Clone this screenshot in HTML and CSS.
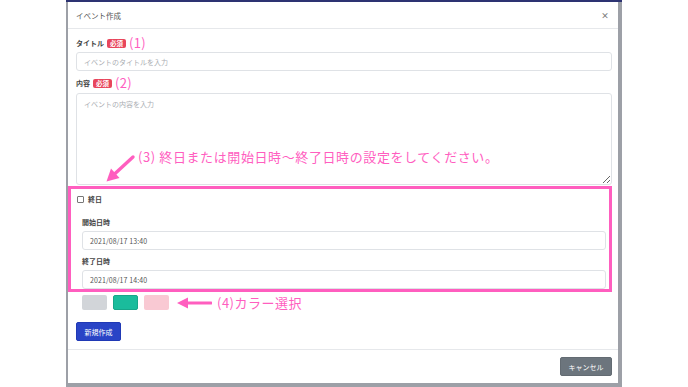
FILE: index.html
```html
<!DOCTYPE html>
<html lang="ja">
<head>
<meta charset="utf-8">
<title>イベント作成</title>
<link rel="stylesheet" href="styles.css">
</head>
<body>
<div class="stage">
  <div class="modal">
    <div class="modal-header">
      <span class="modal-title">イベント作成</span>
      <span class="close">×</span>
    </div>
    <div class="modal-body">
      <div class="label-row"><span class="label">タイトル</span><span class="badge">必須</span><span class="note">(1)</span></div>
      <input class="field field-title" type="text" placeholder="イベントのタイトルを入力">
      <div class="label-row label-row-content"><span class="label">内容</span><span class="badge">必須</span><span class="note">(2)</span></div>
      <textarea class="field field-area" placeholder="イベントの内容を入力"></textarea>
      <div class="date-box">
        <div class="check-row"><span class="checkbox"></span><span class="label">終日</span></div>
        <div class="date-block">
          <div class="sub-label first">開始日時</div>
          <div class="field field-date">2021/08/17 13:40</div>
          <div class="sub-label">終了日時</div>
          <div class="field field-date">2021/08/17 14:40</div>
        </div>
      </div>
      <div class="swatch-row">
        <span class="swatch swatch-gray"></span>
        <span class="swatch swatch-teal"></span>
        <span class="swatch swatch-pink"></span>
        <svg class="arrow-left" width="35" height="12" viewBox="0 0 35 12">
          <line x1="34" y1="6" x2="9" y2="6" stroke="#ff5ebf" stroke-width="3.2" stroke-linecap="round"/>
          <polygon points="0,6 11,0.5 11,11.5" fill="#ff5ebf"/>
        </svg>
        <span class="note note-color">(4)カラー選択</span>
      </div>
      <button class="btn btn-primary">新規作成</button>
    </div>
    <div class="modal-footer">
      <button class="btn btn-secondary">キャンセル</button>
    </div>
    <svg class="arrow-diag" width="33" height="30" viewBox="0 0 33 30">
      <line x1="29" y1="3" x2="10" y2="20.5" stroke="#ff5ebf" stroke-width="3.4" stroke-linecap="round"/>
      <polygon points="2.5,27.5 15.5,24 7,14.6" fill="#ff5ebf"/>
    </svg>
    <div class="note note-date">(3) 終日または開始日時〜終了日時の設定をしてください。</div>
  </div>
</div>
</body>
</html>
```
FILE: styles.css
```css
* { box-sizing: border-box; }
html, body { margin: 0; padding: 0; background: #fff; }
body { font-family: "Noto Sans CJK JP", "Noto Sans", sans-serif; }

.stage {
  margin-left: 66px;
  width: 556px;
  height: 387px;
  background: #9da0a7;
  border-top: 2px solid #2d3372;
  padding: 0 4px 4px 2px;
}

.modal {
  position: relative;
  background: #fff;
  height: 100%;
  display: flex;
  flex-direction: column;
}

.modal-header {
  height: 27px;
  border-bottom: 1px solid #e6e8eb;
  display: flex;
  align-items: center;
  justify-content: space-between;
  padding: 0 9px 0 8px;
  color: #555;
}
.modal-title { font-size: 7.5px; }
.close { font-size: 8px; color: #777; font-weight: bold; line-height: 8px; margin-top: 2px; }

.modal-body {
  padding: 6px 6px 8px 8px;
  border-bottom: 1px solid #e6e8eb;
}

.label-row {
  height: 16px;
  display: flex;
  align-items: center;
  gap: 3px;
}
.label-row-content { margin-top: 4px; }
.label { font-size: 7px; font-weight: bold; color: #444; }
.badge {
  background: #e8465c;
  color: #fff;
  font-size: 6.5px;
  font-weight: bold;
  height: 9px;
  line-height: 9px;
  padding: 0 3px;
  border-radius: 2px;
}
.note { color: #ff5ebf; font-size: 13px; line-height: 16px; letter-spacing: 0.3px; }

.field {
  display: block;
  width: 100%;
  margin: 0;
  height: 19px;
  border: 1px solid #dfe2e6;
  border-radius: 3px;
  font-family: inherit;
  font-size: 7px;
  color: #555;
  padding: 0 7px;
  background: #fff;
  outline: none;
}
.field::placeholder { color: #aaadb2; }
.field-title { margin-top: 1px; }
.field-area {
  margin-top: 2px;
  height: 92px;
  padding: 5px 7px;
  resize: vertical;
  line-height: 10px;
}
.field-date {
  display: flex;
  align-items: center;
  margin-top: 4px;
  padding: 0 7px;
  letter-spacing: 0.1px;
}

.date-box {
  margin: 1px 0 0 -8px;
  border: 3px solid #ff5ebf;
  padding: 5px 3px 0 6px;
}
.check-row {
  height: 10px;
  display: flex;
  align-items: center;
  gap: 4px;
}
.checkbox {
  width: 7px;
  height: 7px;
  border: 1px solid #777;
  border-radius: 1px;
  background: #fff;
}
.date-block { padding-left: 5px; }
.sub-label {
  height: 10px;
  line-height: 10px;
  font-size: 7px;
  font-weight: bold;
  color: #444;
  margin-top: 6px;
}
.sub-label.first { margin-top: 13px; }

.swatch-row {
  margin-top: 3px;
  height: 15px;
  display: flex;
  align-items: center;
  padding-left: 6px;
  gap: 6px;
}
.swatch { width: 25px; height: 15px; border-radius: 2px; }
.swatch-gray { background: #d2d5d9; }
.swatch-teal { background: #1abc9c; border: 1px solid #17a689; }
.swatch-pink { background: #f9c9d3; }
.arrow-left { margin-left: 2px; }
.note-color { line-height: 15px; margin-left: -1px; letter-spacing: 0.5px; }

.btn {
  font-family: inherit;
  font-size: 7px;
  color: #fff;
  border-radius: 2px;
  height: 19px;
  padding: 0;
  cursor: default;
}
.btn-primary {
  display: block;
  margin-top: 12px;
  width: 45px;
  background: #2944c6;
  border: 1px solid #2039b5;
}
.modal-footer {
  flex: 1;
  display: flex;
  justify-content: flex-end;
  align-items: flex-start;
  padding: 7px 6px 0 0;
}
.btn-secondary {
  width: 52px;
  background: #6c757d;
  border: 1px solid #636b72;
}

.arrow-diag { position: absolute; left: 36px; top: 152px; }
.note-date {
  position: absolute;
  left: 70px;
  top: 146px;
  line-height: 18px;
  white-space: nowrap;
  letter-spacing: 0.6px;
}
```
